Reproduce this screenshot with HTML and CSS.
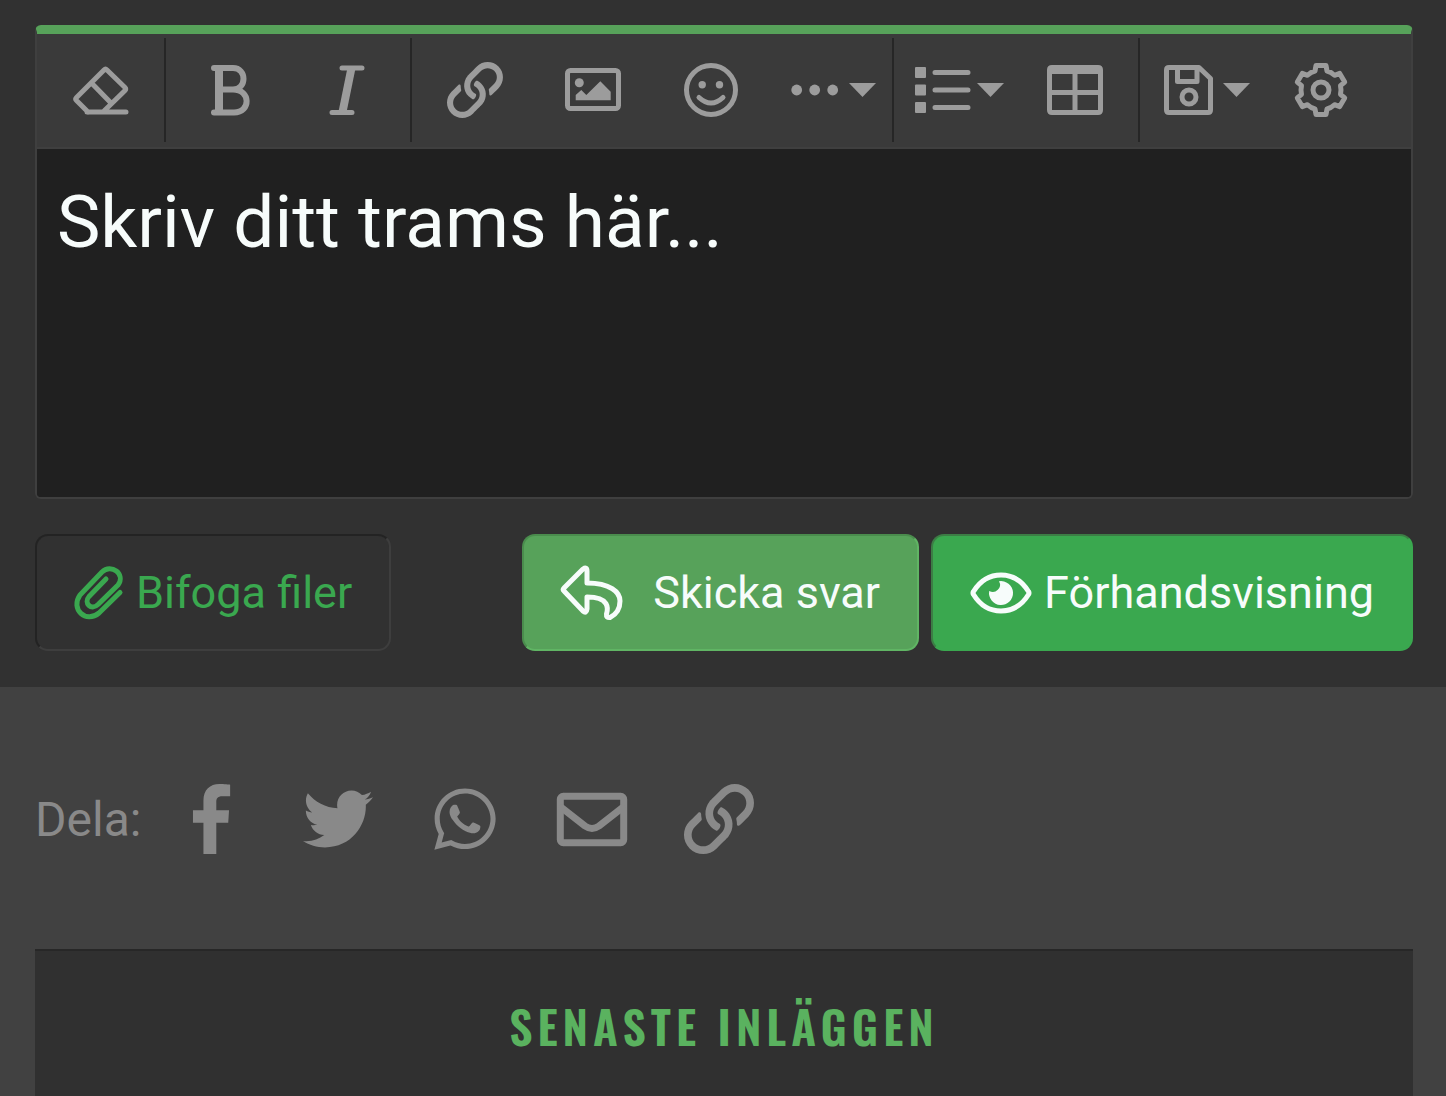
FILE: index.html
```html
<!DOCTYPE html>
<html lang="sv">
<head>
    <meta charset="UTF-8">
    <meta name="viewport" content="width=device-width, initial-scale=1">
    <title>Svara</title>
    <link rel="stylesheet" href="styles.css">
</head>
<body>
<form class="reply">
    <div class="editor">
        <div class="toolbar">
            <div class="group">
                <button type="button" class="tool" aria-label="Ta bort formatering">
                    <svg class="icon" viewBox="0 0 56 56"><path d="M15 50L3.5 38.5Q2 37 3.5 35.5L31 8Q32.5 6.5 34 8L52 25.5Q53.5 27 52 28.5L31 49M14 50H53M18.5 21L38 41"/></svg>
                </button>
            </div>
            <div class="group">
                <button type="button" class="tool" aria-label="Fet">
                    <svg class="icon bold" viewBox="0 0 56 56"><path d="M13 6H32C46 6 46 27.5 32 27.5H18M32 27.5C50 27.5 50 50.5 33 50.5H13"/><path class="thick" d="M18 6V50"/></svg>
                </button>
                <button type="button" class="tool" aria-label="Kursiv">
                    <svg class="icon" viewBox="0 0 56 56"><path d="M23 6H43M13 50.5H33"/><path class="thick" d="M32.5 6L23.5 50"/></svg>
                </button>
            </div>
            <div class="group">
                <button type="button" class="tool" aria-label="Infoga länk">
                    <svg class="icon solid" viewBox="0 0 512 512"><path id="link" d="M314.222 197.78c51.091 51.091 54.377 132.287 9.75 187.16-6.242 7.73-2.784 3.865-84.94 86.02-54.696 54.696-143.266 54.745-197.99 0-54.711-54.69-54.734-143.255 0-197.99 32.773-32.773 51.835-51.899 63.409-63.457 7.463-7.452 20.331-2.354 20.486 8.192a173.31 173.31 0 0 0 4.746 37.828c.966 4.029-.272 8.269-3.202 11.198L80.632 312.57c-32.755 32.775-32.887 85.892 0 118.8 32.775 32.755 85.892 32.887 118.8 0l75.19-75.2c32.718-32.725 32.777-86.013 0-118.79a83.722 83.722 0 0 0-22.814-16.229c-4.623-2.233-7.182-7.25-6.561-12.346 1.356-11.122 6.296-21.885 14.815-30.405l4.375-4.375c3.625-3.626 9.177-4.594 13.76-2.294 12.999 6.524 25.187 15.211 36.025 26.049zM470.958 41.04c-54.724-54.745-143.294-54.696-197.99 0-82.156 82.156-78.698 78.29-84.94 86.02-44.627 54.873-41.341 136.069 9.75 187.16 10.838 10.838 23.026 19.525 36.025 26.049 4.582 2.3 10.134 1.331 13.76-2.294l4.375-4.375c8.52-8.519 13.459-19.283 14.815-30.405.621-5.096-1.938-10.113-6.561-12.346a83.706 83.706 0 0 1-22.814-16.229c-32.777-32.777-32.718-86.065 0-118.79l75.19-75.2c32.908-32.887 86.025-32.755 118.8 0 32.887 32.908 32.755 86.025 0 118.8l-45.848 45.84c-2.93 2.929-4.168 7.169-3.202 11.198a173.31 173.31 0 0 1 4.746 37.828c.155 10.546 13.023 15.644 20.486 8.192 11.574-11.558 30.636-30.684 63.409-63.457 54.733-54.735 54.71-143.3-.001-197.991z"/></svg>
                </button>
                <button type="button" class="tool" aria-label="Infoga bild">
                    <svg class="icon" viewBox="0 0 56 56"><rect x="2.5" y="8.5" width="51" height="38" rx="3"/><g class="solid"><circle cx="14.3" cy="20.7" r="4.5"/><path d="M10.7 38.3V33L16.3 28L21.3 33L35.3 19.3L45.7 29.7V38.3Z"/></g></svg>
                </button>
                <button type="button" class="tool" aria-label="Smilies">
                    <svg class="icon" viewBox="0 0 56 56"><circle cx="28" cy="28" r="24.5"/><path d="M16 35.5Q28 46.5 40 35.5"/><g class="solid"><circle cx="19.2" cy="22.7" r="3.7"/><circle cx="36.5" cy="22.7" r="3.7"/></g></svg>
                </button>
                <button type="button" class="tool drop" aria-label="Mer">
                    <svg class="icon solid" viewBox="0 0 56 56"><circle cx="9.7" cy="28" r="5.4"/><circle cx="27.7" cy="28" r="5.4"/><circle cx="45.7" cy="28" r="5.4"/></svg>
                    <svg class="caret" viewBox="0 0 27 14"><path d="M0 0H27L13.5 14Z"/></svg>
                </button>
            </div>
            <div class="group">
                <button type="button" class="tool drop" aria-label="Lista">
                    <svg class="icon" viewBox="0 0 56 56"><g class="solid"><rect y="5" width="11" height="11" rx="1"/><rect y="22.5" width="11" height="11" rx="1"/><rect y="40" width="11" height="11" rx="1"/></g><path d="M20 10.5H53M20 28H53M20 45.5H53"/></svg>
                    <svg class="caret" viewBox="0 0 27 14"><path d="M0 0H27L13.5 14Z"/></svg>
                </button>
                <button type="button" class="tool" aria-label="Infoga tabell">
                    <svg class="icon solid" viewBox="0 0 56 56"><path fill-rule="evenodd" d="M5 3H51Q56 3 56 8V48Q56 53 51 53H5Q0 53 0 48V8Q0 3 5 3ZM5 12V28H25.5V12ZM30.5 12V28H51V12ZM5 33V48H25.5V33ZM30.5 33V48H51V33Z"/></svg>
                </button>
            </div>
            <div class="group">
                <button type="button" class="tool drop" aria-label="Utkast">
                    <svg class="icon" viewBox="0 0 56 56"><path d="M8 5.5H38L49.5 16.5V48Q49.5 50.5 47 50.5H8Q5.5 50.5 5.5 48V8Q5.5 5.5 8 5.5ZM16.5 6V19.5H36V6"/><circle cx="28" cy="35" r="7"/></svg>
                    <svg class="caret" viewBox="0 0 27 14"><path d="M0 0H27L13.5 14Z"/></svg>
                </button>
                <button type="button" class="tool" aria-label="Växla BB-kod">
                    <svg class="icon" viewBox="-28 -28 56 56"><path d="M-6 -19L-5 -24.5H5L6 -19Q10 -18 13.5 -14.7L18.7 -16.6L23.7 -7.9L19.5 -4.3Q20.5 0 19.5 4.3L23.7 7.9L18.7 16.6L13.5 14.7Q10 18 6 19L5 24.5H-5L-6 19Q-10 18 -13.5 14.7L-18.7 16.6L-23.7 7.9L-19.5 4.3Q-20.5 0 -19.5 -4.3L-23.7 -7.9L-18.7 -16.6L-13.5 -14.7Q-10 -18 -6 -19Z"/><circle r="8"/></svg>
                </button>
            </div>
        </div>
        <textarea class="message" aria-label="Meddelande" placeholder="Skriv ditt trams här..."></textarea>
    </div>
    <div class="actions">
        <button type="button" class="btn attach">
            <svg class="clip" viewBox="0 0 50 56"><path d="M46 27.5L25 48C12 59 -4 44 6 30L28 7C37 -2 52 9 44 20L24 39.5C17 46 9.5 38 15 31.5L32 14"/></svg>
            Bifoga filer
        </button>
        <button type="submit" class="btn send">
            <svg class="arrow" viewBox="0 0 62 56"><path d="M3 23L22 4Q26 1.5 26 6V18C49 18 59 27 59 36C59 45 54 50 49 52.5Q45 53 45.5 49C47 44 49 32 26 32V44Q25.5 49 22 46L3 26Q1.5 24.5 3 23Z"/></svg>
            Skicka svar
        </button>
        <button type="button" class="btn preview">
            <svg class="eye" viewBox="0 0 62 42"><path d="M3.5 22.5Q2.5 21 3.5 19.5C10 9 20 3 31 3S52 9 58.5 19.5Q59.5 21 58.5 22.5C52 33 42 39 31 39S10 33 3.5 22.5Z"/><path class="solid" d="M29 9.2A12 12 0 1 1 19.2 19A7.2 7.2 0 0 0 29 9.2Z"/></svg>
            Förhandsvisning
        </button>
    </div>
</form>

<div class="share">
    <span class="share-label">Dela:</span>
    <div class="share-links">
        <a href="#" aria-label="Facebook"><svg class="solid" viewBox="0 0 264 512"><path d="M76.7 512V283H0v-91h76.7v-71.7C76.7 42.4 124.3 0 193.8 0c33.3 0 70.2 3.6 78.2 5V89h-56.2c-37.8 0-45.1 18-45.1 44.3V192H264l-6 91h-87.3v229"/></svg></a>
        <a href="#" aria-label="Twitter"><svg class="solid" viewBox="0 0 512 512"><path d="M459.37 151.716c.325 4.548.325 9.097.325 13.645 0 138.72-105.583 298.558-298.558 298.558-59.452 0-114.68-17.219-161.137-47.106 8.447.974 16.568 1.299 25.34 1.299 49.055 0 94.213-16.568 130.274-44.832-46.132-.975-84.792-31.188-98.112-72.772 6.498.974 12.995 1.624 19.818 1.624 9.421 0 18.843-1.3 27.614-3.573-48.081-9.747-84.143-51.98-84.143-102.985v-1.299c13.969 7.797 30.214 12.67 47.431 13.319-28.264-18.843-46.781-51.005-46.781-87.391 0-19.492 5.197-37.36 14.294-52.954 51.655 63.675 129.3 105.258 216.365 109.807-1.624-7.797-2.599-15.918-2.599-24.04 0-57.828 46.782-104.934 104.934-104.934 30.213 0 57.502 12.67 76.67 33.137 23.715-4.548 46.456-13.32 66.599-25.34-7.798 24.366-24.366 44.833-46.132 57.827 21.117-2.273 41.584-8.122 60.426-16.243-14.292 20.791-32.161 39.308-52.628 54.253z"/></svg></a>
        <a href="#" aria-label="WhatsApp"><svg class="solid" viewBox="0 0 448 512"><path d="M380.9 97.1C339 55.1 283.2 32 223.9 32c-122.4 0-222 99.6-222 222 0 39.1 10.2 77.3 29.6 111L0 480l117.7-30.9c32.4 17.7 68.9 27 106.1 27h.1c122.3 0 224.1-99.6 224.1-222 0-59.3-25.2-115-67.1-157zm-157 341.6c-33.2 0-65.7-8.9-94-25.7l-6.7-4-69.8 18.3L72 359.2l-4.4-7c-18.5-29.4-28.2-63.3-28.2-98.2 0-101.7 82.8-184.5 184.6-184.5 49.3 0 95.6 19.2 130.4 54.1 34.8 34.9 56.2 81.2 56.1 130.5 0 101.8-84.9 184.6-186.6 184.6zm101.2-138.2c-5.5-2.8-32.8-16.2-37.9-18-5.1-1.9-8.8-2.8-12.5 2.8-3.7 5.6-14.3 18-17.6 21.8-3.2 3.7-6.5 4.2-12 1.4-32.6-16.3-54-29.1-75.5-66-5.7-9.8 5.7-9.1 16.3-30.3 1.8-3.7.9-6.9-.5-9.7-1.4-2.8-12.5-30.1-17.1-41.2-4.5-10.8-9.1-9.3-12.5-9.5-3.2-.2-6.9-.2-10.6-.2-3.7 0-9.7 1.4-14.8 6.9-5.1 5.6-19.4 19-19.4 46.3 0 27.3 19.9 53.7 22.6 57.4 2.8 3.7 39.1 59.7 94.8 83.8 35.2 15.2 49 16.5 66.6 13.9 10.7-1.6 32.8-13.4 37.4-26.4 4.6-13 4.6-24.1 3.2-26.4-1.3-2.5-5-3.9-10.5-6.6z"/></svg></a>
        <a href="#" aria-label="E-post"><svg class="mail" viewBox="0 0 70 70"><rect x="3.3" y="12.3" width="63.4" height="46.4" rx="3"/><path d="M5 24L28 42Q35 47 42 42L65 24"/></svg></a>
        <a href="#" aria-label="Länk"><svg class="solid" viewBox="0 0 512 512"><use href="#link"/></svg></a>
    </div>
</div>

<div class="latest">
    <h3>Senaste inläggen</h3>
</div>
</body>
</html>
```

FILE: styles.css
```css
* {
    box-sizing: border-box;
    margin: 0;
    padding: 0;
}

body {
    display: flex;
    flex-direction: column;
    min-height: 100vh;
    background: #414141;
    font-family: Roboto, sans-serif;
}

svg {
    display: block;
    flex: none;
    overflow: visible;
    fill: none;
    stroke: currentColor;
    stroke-width: 5;
    stroke-linecap: round;
    stroke-linejoin: round;
}

.solid {
    fill: currentColor;
    stroke: none;
}

.bold {
    stroke-width: 6;
}

.thick {
    stroke-width: 8;
    stroke-linecap: butt;
}

button {
    font-family: inherit;
    cursor: pointer;
}

/* reply form */
.reply {
    padding: 25px 33px 36px 35px;
    background: #313131;
}

.editor {
    border: 2px solid #3f3f3f;
    border-top: 9px solid #57a25a;
    border-radius: 6px;
    background: #202020;
    overflow: hidden;
}

.toolbar {
    display: flex;
    flex-wrap: wrap;
    padding: 4px 0 5px 1px;
    background: #3a3a3a;
    border-bottom: 2px solid #3f3f3f;
}

.group {
    display: flex;
    padding: 0 4px;
    border-right: 2px solid #262626;
}

.group:last-child {
    border-right: 0;
}

.tool {
    display: flex;
    align-items: center;
    justify-content: center;
    width: 118px;
    height: 104px;
    background: none;
    border: 0;
    color: #9c9c9c;
}

.drop {
    justify-content: flex-start;
    gap: 6px;
    padding-left: 17px;
}

.icon {
    width: 56px;
    height: 56px;
}

.caret {
    width: 27px;
    height: 14px;
    fill: currentColor;
    stroke: none;
}

.message {
    display: block;
    width: 100%;
    height: 348px;
    padding: 20px;
    border: 0;
    outline: 0;
    resize: none;
    background: #202020;
    color: #f7fcfb;
    font-family: inherit;
    font-size: 73px;
    line-height: 106px;
}

.message::placeholder {
    color: #f7fcfb;
}

.actions {
    display: flex;
    flex-wrap: wrap;
    gap: 12px;
    margin-top: 35px;
}

.btn {
    display: flex;
    align-items: center;
    height: 117px;
    padding: 0 37px;
    border: 2px solid;
    border-radius: 13px;
    font-size: 45px;
}

.attach {
    gap: 12px;
    margin-right: auto;
    background: none;
    border-color: #232323 #3e3e3e #3e3e3e #232323;
    color: #3aa84f;
}

.send {
    gap: 30px;
    background: #57a25a;
    border-color: #4a8c4d #60b564 #60b564 #4a8c4d;
    color: #f7fcfb;
}

.preview {
    gap: 12px;
    background: #3aa84f;
    border-color: #3c7d45 #3aa84f #3aa84f #3c7d45;
    color: #f7fcfb;
}

.clip {
    width: 50px;
    height: 56px;
}

.arrow {
    width: 62px;
    height: 56px;
}

.eye {
    width: 62px;
    height: 42px;
}

/* share */
.share {
    display: flex;
    align-items: center;
    padding: 97px 35px 95px;
    color: #898989;
}

.share-label {
    font-size: 48px;
}

.share-links {
    display: flex;
    gap: 57px;
    margin-left: 35px;
}

.share-links a {
    color: inherit;
}

.share-links svg {
    width: 70px;
    height: 70px;
}

.share-links .mail {
    stroke-width: 7;
}

/* latest posts */
.latest {
    flex: 1;
    margin: 0 33px 0 35px;
    padding-top: 38px;
    background: #303030;
    border-top: 2px solid #272727;
}

.latest h3 {
    font-family: Oswald, sans-serif;
    font-size: 46px;
    font-weight: 600;
    line-height: 72px;
    letter-spacing: 5px;
    text-align: center;
    text-transform: uppercase;
    color: #5ab25f;
}
```
